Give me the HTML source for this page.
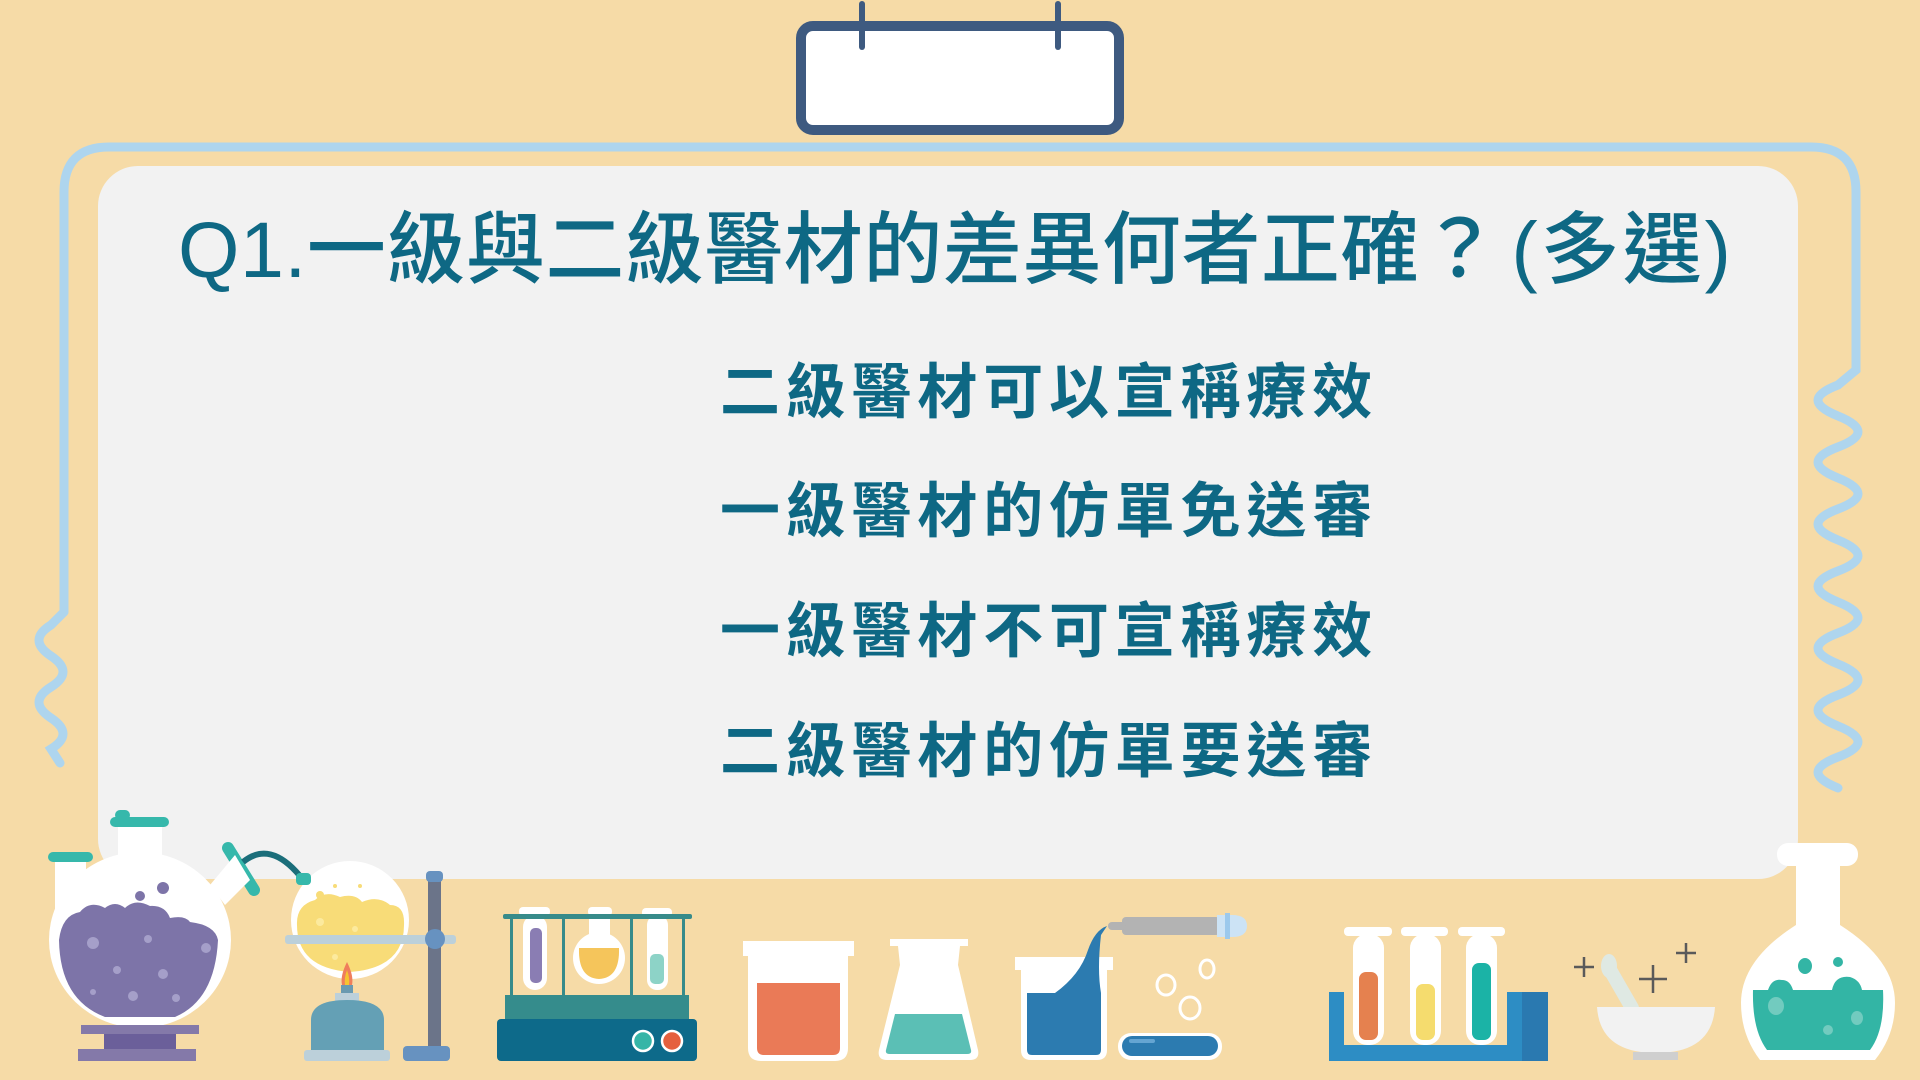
<!DOCTYPE html>
<html><head><meta charset="utf-8"><style>
html,body{margin:0;padding:0;}
body{width:1920px;height:1080px;overflow:hidden;background:#f6dba7;position:relative;font-family:"Liberation Sans","Noto Sans CJK TC",sans-serif;}
svg{position:absolute;left:0;top:0;}
.t{position:absolute;color:#0e6884;white-space:nowrap;}
#title{left:178px;top:205px;font-size:79px;font-weight:500;line-height:90px;letter-spacing:0.5px;}
#title .p{display:inline-block;margin-left:12px;letter-spacing:3px;}
.opt{left:720px;width:660px;font-size:60px;font-weight:700;letter-spacing:5.8px;line-height:70px;}
</style></head><body>
<svg width="1920" height="1080" viewBox="0 0 1920 1080">
<path d="M64 612 L64 192 Q64 147 109 147 L1811 147 Q1856 147 1856 192 L1856 370 L1838 385 Q1798 400 1838 416 T1838 447 T1838 478 T1838 509 T1838 540 T1838 571 T1838 602 T1838 633 T1838 664 T1838 695 T1838 726 T1838 757 T1838 788" fill="none" stroke="#aed5ee" stroke-width="9" stroke-linecap="round"/>
<path d="M64 612 L51 625 Q27 640 51 656 T51 687 T51 718 T51 749 L60 763" fill="none" stroke="#aed5ee" stroke-width="9" stroke-linecap="round"/>
<rect x="98" y="166" width="1700" height="713" rx="40" fill="#f2f2f2"/>
<rect x="801" y="26" width="318" height="104" rx="12" fill="#fff" stroke="#3e5a80" stroke-width="10"/>
<line x1="862" y1="4" x2="862" y2="47" stroke="#3e5a80" stroke-width="6" stroke-linecap="round"/>
<line x1="1058" y1="4" x2="1058" y2="47" stroke="#3e5a80" stroke-width="6" stroke-linecap="round"/>

<line x1="228" y1="848" x2="254" y2="890" stroke="#36b8ab" stroke-width="12" stroke-linecap="round"/>
<path d="M243 862 Q270 840 300 876" fill="none" stroke="#1b6e7a" stroke-width="6"/>
<path d="M210 885 L235 855 L250 880 L225 905 Z" fill="#fff"/>
<rect x="55" y="855" width="31" height="60" fill="#fff"/>
<rect x="48" y="852" width="45" height="10" rx="5" fill="#36b8ab"/>
<rect x="118" y="823" width="44" height="40" fill="#fff"/>
<ellipse cx="140" cy="940" rx="91" ry="88" fill="#fff"/>
<rect x="110" y="817" width="59" height="10" rx="5" fill="#36b8ab"/>
<rect x="115" y="810" width="15" height="10" rx="5" fill="#36b8ab"/>
<path d="M59 940 Q62 915 80 912 Q90 900 105 908 Q115 900 125 908 Q135 898 150 906 Q165 905 170 918 Q185 915 190 922 Q215 925 218 940 Q215 1000 175 1017 L105 1017 Q60 1000 59 940 Z" fill="#7d74a8"/>
<circle cx="140" cy="896" r="5" fill="#7d74a8"/><circle cx="163" cy="888" r="6" fill="#7d74a8"/>
<g fill="#a59fc9"><circle cx="93" cy="943" r="6"/><circle cx="148" cy="939" r="4"/><circle cx="206" cy="948" r="5"/><circle cx="117" cy="970" r="4"/><circle cx="163" cy="974" r="5"/><circle cx="93" cy="992" r="3"/><circle cx="133" cy="996" r="5"/><circle cx="176" cy="998" r="4"/></g>
<rect x="81" y="1025" width="118" height="9" fill="#8479a9"/>
<rect x="104" y="1034" width="72" height="15" fill="#6b5f9a"/>
<rect x="78" y="1049" width="118" height="12" fill="#8479a9"/>

<circle cx="350" cy="920" r="59" fill="#fff"/>
<path d="M297 925 Q296 905 315 900 Q325 890 340 897 Q355 893 362 902 Q378 895 390 905 Q405 905 404 925 Q404 968 350 972 Q297 968 297 925 Z" fill="#f8dc78"/>
<g fill="#fcea9e"><circle cx="320" cy="922" r="4"/><circle cx="355" cy="929" r="3"/><circle cx="335" cy="957" r="3"/></g>
<g fill="#f8dc78"><circle cx="320" cy="895" r="4"/><circle cx="335" cy="886" r="2"/><circle cx="360" cy="886" r="2"/></g>
<rect x="296" y="873" width="15" height="12" rx="4" fill="#36b8ab"/>
<rect x="428" y="872" width="13" height="178" fill="#6b7489"/>
<rect x="426" y="871" width="17" height="11" rx="4" fill="#6792c0"/>
<rect x="403" y="1046" width="47" height="15" rx="4" fill="#6792c0"/>
<rect x="285" y="935" width="171" height="9" rx="3" fill="#bcd0da"/>
<circle cx="435" cy="939" r="10" fill="#6792c0"/>
<path d="M347 962 Q340 976 342 985 L352 985 Q354 976 347 962 Z" fill="#ef7e5b"/>
<path d="M347 970 Q344 978 345 985 L349 985 Q350 978 347 970 Z" fill="#f6c431"/>
<rect x="341" y="985" width="12" height="8" fill="#6a9ab0"/>
<rect x="335" y="993" width="24" height="8" fill="#bcd0da"/>
<path d="M311 1050 L311 1020 Q311 1000 347 1000 Q384 1000 384 1020 L384 1050 Z" fill="#64a0b5"/>
<rect x="304" y="1050" width="86" height="11" rx="3" fill="#bcd0da"/>

<g fill="#fff"><rect x="523" y="915" width="24" height="75" rx="12"/><rect x="519" y="907" width="31" height="9" rx="4"/>
<rect x="588" y="907" width="24" height="9" rx="4"/><rect x="589" y="915" width="21" height="25"/><circle cx="599" cy="958" r="26"/>
<rect x="647" y="915" width="21" height="75" rx="10"/><rect x="642" y="908" width="30" height="9" rx="4"/></g>
<rect x="530" y="928" width="12" height="55" rx="5" fill="#8a7db3"/>
<path d="M579 948 L619 948 Q620 978 599 979 Q578 978 579 948 Z" fill="#f5c55b"/>
<rect x="650" y="954" width="14" height="30" rx="5" fill="#8dd3c7"/>
<rect x="503" y="914" width="189" height="5" rx="2" fill="#378b8a"/>
<g fill="#378b8a"><rect x="510" y="916" width="3" height="82"/><rect x="562" y="916" width="3" height="82"/><rect x="630" y="916" width="3" height="82"/><rect x="682" y="916" width="3" height="82"/></g>
<rect x="505" y="995" width="184" height="25" fill="#358c8c"/>
<rect x="497" y="1019" width="200" height="42" rx="4" fill="#0d6a8a"/>
<circle cx="643" cy="1041" r="10" fill="#36b5a7" stroke="#fff" stroke-width="2.5"/>
<circle cx="672" cy="1041" r="10" fill="#e5603e" stroke="#fff" stroke-width="2.5"/>

<rect x="743" y="941" width="111" height="15" fill="#fff"/>
<path d="M748 955 L848 955 L848 1048 Q848 1061 835 1061 L761 1061 Q748 1061 748 1048 Z" fill="#fff"/>
<path d="M757 983 L840 983 L840 1048 Q840 1055 833 1055 L764 1055 Q757 1055 757 1048 Z" fill="#ea7a57"/>
<path d="M890 939 L968 939 L968 946 L960 946 L958 965 L978 1050 Q980 1060 970 1060 L887 1060 Q877 1060 879 1050 L900 965 L898 946 L890 946 Z" fill="#fff"/>
<path d="M895 1014 L962 1014 L971 1050 Q972 1054 967 1054 L890 1054 Q885 1054 886 1050 Z" fill="#5bbfb5"/>

<rect x="1015" y="957" width="98" height="13" fill="#fff"/>
<path d="M1021 969 L1107 969 L1107 1050 Q1107 1060 1097 1060 L1031 1060 Q1021 1060 1021 1050 Z" fill="#fff"/>
<path d="M1027 993 L1055 993 Q1080 975 1088 950 Q1095 930 1107 926 L1101 935 Q1097 970 1101 993 L1101 1050 Q1101 1055 1096 1055 L1032 1055 Q1027 1055 1027 1050 Z" fill="#2c7bb0"/>
<rect x="1122" y="917" width="98" height="18" rx="4" fill="#b3b3b3"/>
<rect x="1108" y="922" width="18" height="8" rx="4" fill="#b3b3b3"/>
<path d="M1217 915 L1232 915 Q1247 915 1247 926 Q1247 937 1232 937 L1217 937 Z" fill="#cce3f5"/>
<rect x="1225" y="913" width="5" height="26" fill="#9cc9ec"/>
<g fill="none" stroke="#fff" stroke-width="3"><ellipse cx="1207" cy="969" rx="7" ry="9"/><ellipse cx="1166" cy="985" rx="9" ry="10"/><ellipse cx="1190" cy="1008" rx="10" ry="11"/></g>
<rect x="1118" y="1033" width="104" height="27" rx="13" fill="#fff"/>
<rect x="1122" y="1036" width="96" height="20" rx="10" fill="#2c7bb0"/>
<rect x="1129" y="1039" width="26" height="4" rx="2" fill="#65a5d2"/>

<path d="M1329 992 L1344 992 L1344 1045 L1507 1045 L1507 992 L1548 992 L1548 1061 L1329 1061 Z" fill="#2d8dc4"/>
<rect x="1522" y="992" width="26" height="69" fill="#2a79b0"/>
<g fill="#fff"><rect x="1344" y="927" width="48" height="9" rx="4"/><rect x="1401" y="927" width="47" height="9" rx="4"/><rect x="1458" y="927" width="47" height="9" rx="4"/>
<rect x="1353" y="934" width="31" height="111" rx="14"/><rect x="1410" y="934" width="31" height="111" rx="14"/><rect x="1466" y="934" width="31" height="111" rx="14"/></g>
<rect x="1359" y="972" width="19" height="68" rx="7" fill="#e5814f"/>
<rect x="1416" y="984" width="19" height="56" rx="7" fill="#f5dc6e"/>
<rect x="1472" y="963" width="19" height="77" rx="7" fill="#1bb3a6"/>

<line x1="1609" y1="968" x2="1632" y2="1008" stroke="#dfe9e3" stroke-width="14" stroke-linecap="round"/>
<ellipse cx="1609" cy="966" rx="8" ry="12" fill="#dfe9e3"/>
<path d="M1597 1007 L1715 1007 Q1712 1053 1656 1053 Q1600 1053 1597 1007 Z" fill="#f2f2f2"/>
<rect x="1633" y="1052" width="45" height="8" fill="#cfcfcf"/>
<g stroke="#5a5a5a" stroke-width="2.5"><path d="M1584 957 V977 M1574 967 H1594"/><path d="M1653 965 V993 M1639 979 H1667"/><path d="M1686 943 V963 M1676 953 H1696"/></g>

<rect x="1796" y="860" width="44" height="70" fill="#fff"/>
<rect x="1777" y="843" width="81" height="23" rx="11" fill="#fff"/>
<path d="M1796 925 L1840 925 Q1895 960 1895 1003 Q1895 1035 1875 1060 L1760 1060 Q1741 1035 1741 1003 Q1741 960 1796 925 Z" fill="#fff"/>
<path d="M1753 990 L1768 990 Q1772 978 1782 980 Q1790 980 1793 990 L1832 990 Q1835 975 1850 977 Q1860 980 1862 990 L1883 990 Q1885 1030 1870 1050 L1767 1050 Q1752 1030 1753 990 Z" fill="#33b5a5"/>
<ellipse cx="1805" cy="966" rx="7" ry="8" fill="#33b5a5"/><ellipse cx="1838" cy="962" rx="5" ry="5" fill="#33b5a5"/>
<g fill="#72cbbf"><ellipse cx="1776" cy="1006" rx="8" ry="9"/><ellipse cx="1857" cy="1018" rx="6" ry="7"/><ellipse cx="1828" cy="1030" rx="5" ry="5"/></g>
</svg>

<div class="t" id="title">Q1.一級與二級醫材的差異何者正確？<span class="p">(多選)</span></div>
<div class="t opt" style="top:358px">二級醫材可以宣稱療效</div>
<div class="t opt" style="top:477px">一級醫材的仿單免送審</div>
<div class="t opt" style="top:597px">一級醫材不可宣稱療效</div>
<div class="t opt" style="top:717px">二級醫材的仿單要送審</div>
</body></html>
